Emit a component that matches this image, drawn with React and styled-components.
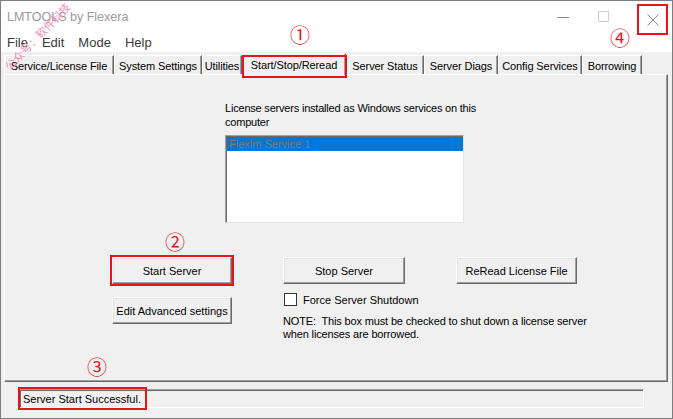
import styled, { createGlobalStyle } from 'styled-components';

const GlobalStyle = createGlobalStyle`
  html, body {
    margin: 0;
    padding: 0;
    background: #fff;
  }
  body {
    font-family: "Liberation Sans", Arial, sans-serif;
  }
`;

const tabs = [
  { label: 'Service/License File', width: 110 },
  { label: 'System Settings', width: 88 },
  { label: 'Utilities', width: 40 },
  { label: 'Start/Stop/Reread', width: 104, active: true },
  { label: 'Server Status', width: 78 },
  { label: 'Server Diags', width: 74 },
  { label: 'Config Services', width: 84 },
  { label: 'Borrowing', width: 60 },
];

const badges = [
  { n: '①', x: 300, y: 35 },
  { n: '②', x: 175, y: 242 },
  { n: '③', x: 97, y: 367 },
  { n: '④', x: 620, y: 38 },
];

const App = () => {
  return (
    <>
      <GlobalStyle />
      <Window>
        <TitleBar>
          <Title>LMTOOLS by Flexera</Title>
          <Controls>
            <svg width="12" height="12" viewBox="0 0 12 12">
              <line x1="0" y1="6.5" x2="12" y2="6.5" stroke="#8a8a8a" strokeWidth="1" />
            </svg>
            <svg width="11" height="11" viewBox="0 0 11 11">
              <rect x="0.5" y="0.5" width="10" height="10" fill="none" stroke="#cfcfcf" />
            </svg>
            <CloseBox>
              <svg width="12" height="12" viewBox="0 0 12 12">
                <path d="M0.5 0.5 L11.5 11.5 M11.5 0.5 L0.5 11.5" stroke="#8a8a8a" strokeWidth="1" />
              </svg>
            </CloseBox>
          </Controls>
        </TitleBar>

        <MenuBar>
          <MenuItem>File</MenuItem>
          <MenuItem>Edit</MenuItem>
          <MenuItem>Mode</MenuItem>
          <MenuItem>Help</MenuItem>
        </MenuBar>

        <Body>
          <TabRow>
            {tabs.map((t) => (
              <Tab key={t.label} $width={t.width} $active={t.active}>
                {t.label}
              </Tab>
            ))}
          </TabRow>

          <Panel>
            <InfoText>
              License servers installed as Windows services on this
              <br />
              computer
            </InfoText>
            <ListBox>
              <ListItem $selected>Flexlm Service 1</ListItem>
            </ListBox>

            <Controls2>
              <Button $marked>Start Server</Button>
              <Button>Stop Server</Button>
              <Button>ReRead License File</Button>
              <Button $top={4}>Edit Advanced settings</Button>
              <ShutdownBlock>
                <CheckRow>
                  <CheckBox />
                  <span>Force Server Shutdown</span>
                </CheckRow>
                <Note>
                  NOTE:&nbsp; This box must be checked to shut down a license server
                  <br />
                  when licenses are borrowed.
                </Note>
              </ShutdownBlock>
            </Controls2>
          </Panel>

          <StatusField>
            <StatusText>Server Start Successful.</StatusText>
          </StatusField>
        </Body>

        <Watermark>公众号：软件科技</Watermark>
        {badges.map((b) => (
          <Badge key={b.n} $x={b.x} $y={b.y}>
            {b.n}
          </Badge>
        ))}
      </Window>
    </>
  );
};

export default App;

const Window = styled.div`
  position: relative;
  width: 673px;
  height: 419px;
  box-sizing: border-box;
  border: 1px solid #7d7d7d;
  background: #f0f0f0;
  display: flex;
  flex-direction: column;
  overflow: hidden;
`;

const TitleBar = styled.div`
  height: 31px;
  background: #fff;
  display: flex;
  align-items: center;
  flex-shrink: 0;
`;

const Title = styled.div`
  flex: 1;
  padding-left: 6px;
  color: #9a9a9a;
  font-size: 12.5px;
`;

const Controls = styled.div`
  display: flex;
  align-items: center;
  gap: 29px;
  padding-right: 4px;
  align-self: stretch;
`;

const CloseBox = styled.div`
  position: relative;
  z-index: 2;
  width: 31px;
  height: 31px;
  box-sizing: border-box;
  border: 2px solid #e8131b;
  display: flex;
  align-items: center;
  justify-content: center;
  align-self: flex-start;
  margin-top: 3px;
  margin-left: -1px;
`;

const MenuBar = styled.div`
  height: 20px;
  background: #fff;
  display: flex;
  align-items: center;
  gap: 13px;
  padding-left: 6px;
  flex-shrink: 0;
`;

const MenuItem = styled.div`
  font-size: 13px;
  color: #3a3a3a;
  padding-right: 1px;
`;

const Body = styled.div`
  flex: 1;
  display: flex;
  flex-direction: column;
  padding-top: 1px;
`;

const TabRow = styled.div`
  height: 21px;
  display: flex;
  align-items: flex-end;
  padding-left: 3px;
  flex-shrink: 0;
`;

const Tab = styled.div`
  position: relative;
  z-index: ${(p) => (p.$active ? 1 : 0)};
  width: ${(p) => p.$width}px;
  height: ${(p) => (p.$active ? 22 : 19)}px;
  margin-bottom: ${(p) => (p.$active ? -1 : 0)}px;
  box-sizing: border-box;
  background: #f0f0f0;
  border-top: 1px solid #fff;
  border-left: 1px solid #fff;
  border-right: 1px solid #696969;
  box-shadow: inset -1px 0 #a0a0a0;
  display: flex;
  align-items: center;
  justify-content: center;
  font-size: 11px;
  letter-spacing: -0.1px;
  color: #000;
  white-space: nowrap;
  padding-top: ${(p) => (p.$active ? 0 : 1)}px;

  &::after {
    content: '';
    display: ${(p) => (p.$active ? 'block' : 'none')};
    position: absolute;
    left: -1px;
    right: -2px;
    top: 1px;
    bottom: -3px;
    border: 2px solid #e8131b;
  }
`;

const Panel = styled.div`
  height: 308px;
  margin: 0 4px 0 3px;
  box-sizing: border-box;
  border-style: solid;
  border-width: 1px;
  border-color: #fff #696969 #696969 #fff;
  box-shadow: inset -1px -1px #a0a0a0;
  display: flex;
  flex-direction: column;
  flex-shrink: 0;
`;

const InfoText = styled.div`
  margin: 26px 0 0 220px;
  font-size: 11px;
  letter-spacing: -0.2px;
  line-height: 14px;
  color: #000;
  white-space: nowrap;
`;

const ListBox = styled.div`
  margin: 6px 0 0 220px;
  width: 239px;
  height: 88px;
  box-sizing: border-box;
  background: #fff;
  border-style: solid;
  border-width: 1px;
  border-color: #a0a0a0 #e3e3e3 #e3e3e3 #a0a0a0;
  box-shadow: inset 1px 1px #696969;
  padding: 1px 0 0 1px;
`;

const ListItem = styled.div`
  height: 14px;
  line-height: 14px;
  padding-left: 2px;
  font-size: 11px;
  background: ${(p) => (p.$selected ? '#0078d7' : 'transparent')};
  color: ${(p) => (p.$selected ? '#7b7b7b' : '#000')};
`;

const Controls2 = styled.div`
  margin: 34px 0 0 107px;
  display: grid;
  grid-template-columns: 120px 122px 121px;
  column-gap: 51px;
  row-gap: 9px;
  align-items: start;
`;

const Button = styled.div`
  height: 27px;
  margin-top: ${(p) => p.$top || 0}px;
  box-sizing: border-box;
  background: #f0f0f0;
  border-style: solid;
  border-width: 1px;
  border-color: #fff #696969 #696969 #fff;
  box-shadow: inset -1px -1px #a0a0a0, inset 1px 1px #e3e3e3;
  display: flex;
  align-items: center;
  justify-content: center;
  font-size: 11px;
  color: #000;
  white-space: nowrap;
  outline: ${(p) => (p.$marked ? '2px solid #e8131b' : 'none')};
  outline-offset: 0;
`;

const ShutdownBlock = styled.div`
  grid-column: 2 / span 2;
  display: flex;
  flex-direction: column;
  gap: 9px;
`;

const CheckRow = styled.div`
  display: flex;
  align-items: center;
  gap: 6px;
  font-size: 11px;
  color: #000;
  height: 13px;
  margin-left: 1px;
`;

const CheckBox = styled.div`
  width: 13px;
  height: 13px;
  box-sizing: border-box;
  background: #fff;
  border: 1px solid #333;
`;

const Note = styled.div`
  font-size: 11px;
  letter-spacing: -0.15px;
  line-height: 13px;
  color: #000;
  white-space: nowrap;
`;

const StatusField = styled.div`
  height: 19px;
  margin: 7px 28px 0 18px;
  box-sizing: border-box;
  border-style: solid;
  border-width: 1px;
  border-color: #a0a0a0 #fff #fff #a0a0a0;
  box-shadow: inset 1px 1px #696969;
  display: flex;
  align-items: stretch;
  padding-left: 1px;
`;

const StatusText = styled.span`
  display: flex;
  align-items: center;
  padding: 0 3px 0 2px;
  font-size: 11px;
  color: #000;
  outline: 2px solid #e8131b;
  outline-offset: 1px;
`;

const Watermark = styled.div`
  position: absolute;
  left: 0;
  top: 28px;
  transform: translateX(-8px) rotate(-46deg);
  font-family: "Noto Sans CJK SC", sans-serif;
  font-size: 11px;
  line-height: 14px;
  color: #f08cb8;
  white-space: nowrap;
  pointer-events: none;
`;

const Badge = styled.div`
  position: absolute;
  left: ${(p) => p.$x - 11}px;
  top: ${(p) => p.$y - 11}px;
  width: 20px;
  height: 20px;
  display: flex;
  align-items: center;
  justify-content: center;
  font-family: "Noto Sans CJK SC", sans-serif;
  font-size: 20px;
  line-height: 1;
  color: #e8131b;
`;
